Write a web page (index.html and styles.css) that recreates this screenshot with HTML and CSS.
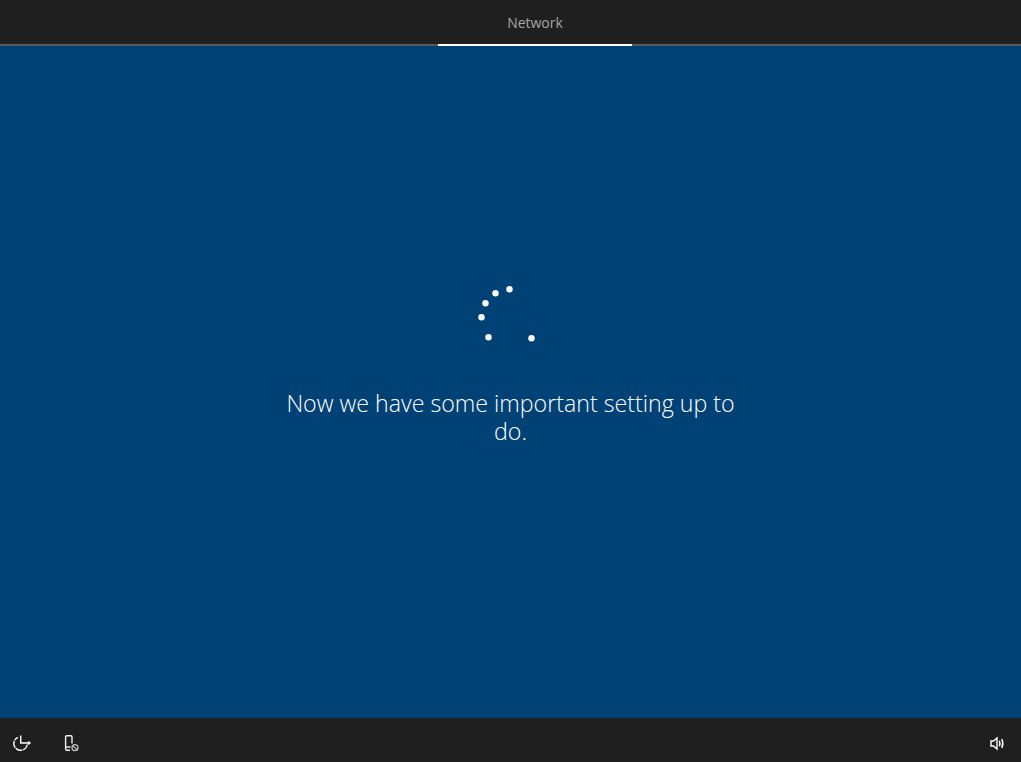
FILE: index.html
```html
<!DOCTYPE html>
<html lang="en">
<head>
<meta charset="utf-8">
<title>Network</title>
<link rel="stylesheet" href="styles.css">
</head>
<body>
<div class="page">
  <header class="topbar">
    <div class="tab">Network</div>
  </header>
  <main class="main">
    <svg class="spinner" width="60" height="60" viewBox="480.5 283.7 60 60" aria-hidden="true">
      <circle cx="509" cy="289" r="3.2"/>
      <circle cx="495" cy="293" r="3.2"/>
      <circle cx="485" cy="303" r="3.2"/>
      <circle cx="481" cy="317" r="3.2"/>
      <circle cx="488" cy="337" r="3.2"/>
      <circle cx="531" cy="338" r="3.2"/>
    </svg>
    <p class="message">Now we have some important setting up to do.</p>
  </main>
  <footer class="bottombar">
    <div class="icons-left">
      <svg class="icon" width="18" height="18" viewBox="0 0 18 18" fill="none" stroke="#fff" stroke-width="1.4">
        <path d="M14.2 10.5A6.7 6.7 0 1 1 5 3.4" stroke-dasharray="7 0.8"/>
        <path d="M7.7 1.5V9H17"/>
        <path d="M15.3 7.4L17 9L15.3 10.6"/>
      </svg>
      <svg class="icon" width="18" height="18" viewBox="0 0 18 18" fill="none" stroke="#f0f0f0" stroke-width="1.4">
        <path d="M3.6 13V2.8Q3.6 1.8 4.6 1.8H9Q10 1.8 10 2.8V9.5"/>
        <path d="M3.6 13V15Q3.6 16.2 4.8 16.2H8"/>
        <path d="M3.6 13H8.5"/>
        <circle cx="13" cy="13.7" r="3" stroke="#c4c4c4" stroke-width="1.2"/>
        <path d="M10.9 11.6L15.1 15.8" stroke="#c4c4c4" stroke-width="1.2"/>
      </svg>
    </div>
    <svg class="icon" width="18" height="18" viewBox="0 0 18 18" fill="none" stroke="#fff" stroke-width="1.4">
      <path d="M4 7H6.5L10 4V15L6.5 12H4Z"/>
      <path d="M12.3 6.8Q13.6 9.5 12.3 12.2"/>
      <path d="M14.8 5Q16.8 9.5 14.8 14"/>
    </svg>
  </footer>
</div>
</body>
</html>
```
FILE: styles.css
```css
* { box-sizing: border-box; }
html, body { margin: 0; height: 100%; }
body { font-family: "Open Sans", "Noto Sans", sans-serif; background: #004275; overflow: hidden; }
.page { display: flex; flex-direction: column; height: 762px; }
.topbar {
  height: 46px;
  background: #1f1f1f;
  border-bottom: 2px solid #5a5a5a;
  display: flex;
  justify-content: center;
  padding-left: 49px;
}
.tab {
  width: 194px;
  height: 46px;
  border-bottom: 2px solid #fff;
  color: #a6a6a6;
  font-size: 14px;
  line-height: 46px;
  text-align: center;
}
.main {
  flex: 1;
  background: #004275;
  display: flex;
  flex-direction: column;
  align-items: center;
  padding-top: 238px;
}
.spinner { display: block; fill: #fff; overflow: visible; }
.message {
  margin: 45px 0 0;
  width: 460px;
  color: #fff;
  font-size: 23.2px;
  font-weight: 300;
  line-height: 28px;
  text-align: center;
}
.bottombar {
  height: 44px;
  background: #1f1f1f;
  display: flex;
  align-items: center;
  justify-content: space-between;
  padding: 6px 16px 0 13px;
}
.icons-left { display: flex; gap: 31px; }
.icon { display: block; }
```
